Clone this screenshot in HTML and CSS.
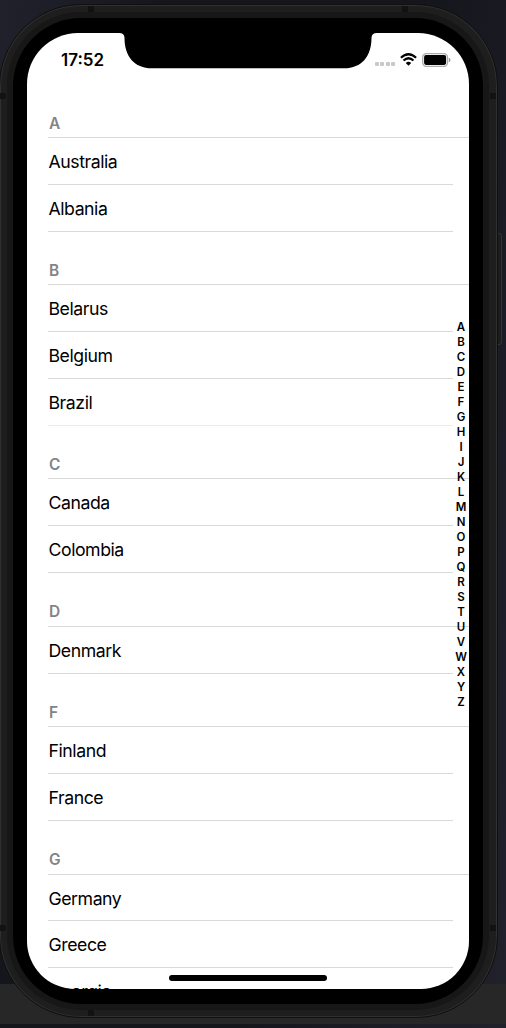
FILE: index.html
```
<!DOCTYPE html>
<html lang="en">
<head>
<meta charset="utf-8">
<title>Countries</title>
<link rel="stylesheet" href="styles.css">
</head>
<body>
<div class="dock"></div>
<div class="power"></div>
<div class="phone">
  <i class="band band-tl"></i><i class="band band-tr"></i>
  <i class="band band-bl"></i>
  <i class="band band-lt"></i><i class="band band-rt"></i>
  <i class="band band-lb"></i><i class="band band-rb"></i>
  <div class="rim"><div class="bezel"><main class="screen">
    <svg class="notch" width="258" height="36" viewBox="0 0 258 36"><path d="M0 0H258Q252.500 0 252.500 5C252.500 23 243 35.300 225 35.300H33C15 35.300 5.500 23 5.500 5Q5.500 0 0 0Z"/></svg>
    <header class="status">
      <span class="time">17:52</span>
      <span class="dots"><i></i><i></i><i></i><i></i></span>
      <svg class="wifi" width="17" height="13" viewBox="0 0 17 13"><g fill="none" stroke="#000" stroke-width="2.200"><path d="M.9 4.700Q8.500 -2.200 16.100 4.700"/><path d="M3.500 7.500Q8.500 3 13.500 7.500"/></g><path d="M5.800 9.900Q8.500 7.700 11.200 9.900L8.500 12.700Z"/></svg>
      <svg class="battery" width="29" height="14" viewBox="0 0 29 14"><rect x=".7" y=".7" width="24.800" height="12.600" rx="3.500" fill="#fff" stroke="#aaa" stroke-width="1.300"/><rect x="2.100" y="2.100" width="22" height="9.800" rx="1.800"/><path d="M26.800 4.700Q28.500 5.300 28.500 7T26.800 9.300Z" fill="#999"/></svg>
    </header>
    <div class="list">
      <section><h2>A</h2><ul><li>Australia</li><li>Albania</li></ul></section>
      <section><h2>B</h2><ul><li>Belarus</li><li>Belgium</li><li class="faint">Brazil</li></ul></section>
      <section><h2>C</h2><ul><li>Canada</li><li>Colombia</li></ul></section>
      <section><h2>D</h2><ul><li>Denmark</li></ul></section>
      <section><h2>F</h2><ul><li>Finland</li><li>France</li></ul></section>
      <section><h2>G</h2><ul><li>Germany</li><li>Greece</li><li>Georgia</li></ul></section>
    </div>
    <nav class="index"><span>A</span><span>B</span><span>C</span><span>D</span><span>E</span><span>F</span><span>G</span><span>H</span><span>I</span><span>J</span><span>K</span><span>L</span><span>M</span><span>N</span><span>O</span><span>P</span><span>Q</span><span>R</span><span>S</span><span>T</span><span>U</span><span>V</span><span>W</span><span>X</span><span>Y</span><span>Z</span></nav>
    <div class="home"></div>
  </main></div></div>
</div>
</body>
</html>
```

FILE: styles.css
```
* { box-sizing: border-box; }
body {
  margin: 0;
  position: relative;
  width: 506px;
  height: 1028px;
  overflow: hidden;
  padding-top: 4px;
  background: linear-gradient(100deg, #20212b 0, #15161c 25%, #15161c 60%, #20212b 100%);
  font-family: Inter, "Liberation Sans", sans-serif;
  color: #000;
}
.dock {
  position: absolute;
  left: 0;
  right: 0;
  top: 984px;
  height: 40px;
  background: #272727;
}
.power {
  position: absolute;
  left: 494px;
  top: 233px;
  width: 8px;
  height: 112px;
  background: #1d1d1e;
  border: 1px solid #333436;
  border-radius: 3px;
}
.phone {
  position: relative;
  width: 499px;
  height: 1014px;
  margin-left: -1px;
  padding: 7px 8px 7px 7px;
  border-radius: 82px;
  background: #1e1e1e;
  border: 1px solid #101011;
  box-shadow: inset 0 0 0 1px #303031;
}
.band { position: absolute; width: 6px; height: 6px; background: #121212; }
.band-tl { left: 88px; top: 1px; }
.band-tr { left: 402px; top: 1px; }
.band-bl { left: 88px; bottom: 1px; }
.band-lt { left: 0; top: 88px; }
.band-rt { right: 1px; top: 88px; }
.band-lb { left: 0; top: 920px; }
.band-rb { right: 1px; top: 920px; }
.rim {
  height: 998px;
  padding: 6px;
  border-radius: 74px;
  background: #171717;
}
.bezel {
  height: 986px;
  padding: 15px 14px;
  border-radius: 68px;
  background: #000;
}
.screen {
  position: relative;
  width: 442px;
  height: 956px;
  overflow: hidden;
  border-radius: 51px 51px 48px 48px;
  background: #fff;
}
.notch { position: absolute; left: 92px; top: 0; }
.status {
  display: flex;
  height: 65px;
  padding: 16px 17px 0 34px;
  align-items: flex-start;
}
.time {
  margin-right: auto;
  padding-top: 1px;
  font-size: 17px;
  line-height: 21px;
  font-weight: 600;
}
.dots { display: flex; gap: 1.300px; margin: 13px 5px 0 0; }
.dots i { width: 4px; height: 4px; border-radius: 1px; background: #c8c8c8; }
.wifi { margin: 4px 5px 0 0; }
.battery { margin: 3.500px 1px 0 0; }
.list { padding-left: 21px; }
h2 {
  margin: 0;
  height: 53.760px;
  padding: 29px 0 0 1px;
  border-bottom: 1px solid #d9d9d9;
  color: #848487;
  font-size: 15.500px;
  line-height: 20px;
  font-weight: 600;
}
section:first-child h2 { height: 40px; padding-top: 16px; }
section:last-child { margin-top: -.2px; }
ul { margin: 0 16px 0 0; padding: 0; list-style: none; }
li {
  height: 46.800px;
  padding-left: .5px;
  border-bottom: 1px solid #d9d9d9;
  font-size: 17.700px;
  line-height: 47px;
  letter-spacing: -.45px;
}
.faint { border-color: #ebebeb; }
.index {
  position: absolute;
  right: 0;
  top: 287px;
  width: 16px;
  display: flex;
  flex-direction: column;
  text-align: center;
  font-size: 11.500px;
  line-height: 15px;
  font-weight: 600;
}
.home {
  position: absolute;
  left: 142px;
  bottom: 8.500px;
  width: 158px;
  height: 5.500px;
  border-radius: 3px;
  background: #000;
}
```
